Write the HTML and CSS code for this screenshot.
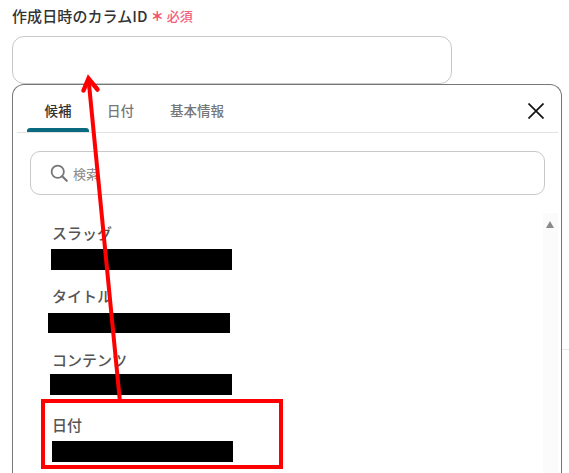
FILE: index.html
```html
<!DOCTYPE html>
<html lang="ja">
<head>
<meta charset="utf-8">
<title>作成日時のカラムID</title>
<link rel="stylesheet" href="styles.css">
</head>
<body>
<div class="backdrop-line"></div>
<main class="page">
  <div class="field-label">
    <span class="label-text">作成日時のカラムID</span>
    <span class="req-star">＊</span>
    <span class="req-text">必須</span>
  </div>
  <div class="text-input"></div>
  <section class="panel">
    <div class="tabs">
      <div class="tab tab-active">候補</div>
      <div class="tab tab-date">日付</div>
      <div class="tab tab-info">基本情報</div>
      <svg class="close" viewBox="0 0 16 16" width="16" height="16" aria-hidden="true">
        <path d="M0.5 0.5 L15.5 15.5 M15.5 0.5 L0.5 15.5" fill="none" stroke="#111" stroke-width="1.7"/>
      </svg>
    </div>
    <div class="search">
      <svg class="search-icon" viewBox="0 0 20 20" width="18" height="18" aria-hidden="true">
        <circle cx="8.6" cy="8.6" r="6.8" fill="none" stroke="#777" stroke-width="2"/>
        <path d="M13.6 13.6 L18.6 18.6" fill="none" stroke="#777" stroke-width="2.4" stroke-linecap="round"/>
      </svg>
      <span class="search-text">検索</span>
    </div>
    <div class="list-wrap">
      <ul class="list">
        <li class="item item-slug"><div class="item-name">スラッグ</div><div class="redact"></div></li>
        <li class="item item-title"><div class="item-name">タイトル</div><div class="redact"></div></li>
        <li class="item item-content"><div class="item-name">コンテンツ</div><div class="redact"></div></li>
        <li class="item item-date"><div class="item-name">日付</div><div class="redact"></div></li>
      </ul>
      <div class="scrollbar"><span class="scroll-up"></span></div>
    </div>
  </section>
</main>
<div class="highlight"></div>
<svg class="arrow" width="569" height="473" viewBox="0 0 569 473" aria-hidden="true">
  <path d="M119.8 400 L88.6 80" fill="none" stroke="#ff0000" stroke-width="4"/>
  <path d="M83.5 90.5 L88.5 78.5 L97.5 89.5" fill="none" stroke="#ff0000" stroke-width="4.5" stroke-linecap="round" stroke-linejoin="miter"/>
</svg>
</body>
</html>
```
FILE: styles.css
```css
html, body {
  margin: 0;
  padding: 0;
  background: #fff;
}
body {
  width: 569px;
  height: 473px;
  overflow: hidden;
  position: relative;
  font-family: "Noto Sans CJK JP", "Noto Sans", sans-serif;
}
.backdrop-line {
  position: absolute;
  left: 562px;
  top: 349px;
  width: 7px;
  height: 1px;
  background: #e8e8e8;
}
.page {
  padding: 5px 0 0 12px;
}
.field-label {
  display: flex;
  align-items: center;
  height: 22px;
  color: #333;
}
.label-text {
  font-size: 15px;
  font-weight: 500;
  line-height: 22px;
  letter-spacing: 0.1px;
}
.req-star {
  margin-left: 3px;
  width: 13px;
  font-size: 13px;
  font-weight: 900;
  line-height: 22px;
  text-align: center;
  color: #f4506c;
}
.req-text {
  margin-left: 3px;
  font-size: 13px;
  font-weight: 500;
  color: #f4607a;
  line-height: 22px;
}
.text-input {
  box-sizing: border-box;
  width: 440px;
  height: 48px;
  margin-top: 9px;
  border: 1px solid #c8c8c8;
  border-radius: 12px;
  background: #fff;
}
.panel {
  box-sizing: border-box;
  width: 550px;
  height: 389px;
  padding: 0 3px 0 4px;
  border: 1px solid #777;
  border-bottom: 0;
  border-radius: 12px 12px 0 0;
  background: #fff;
}
.tabs {
  position: relative;
  display: flex;
  height: 47px;
  border-bottom: 1px solid #e2e2e2;
}
.tab {
  position: relative;
  font-size: 13.5px;
  font-weight: 500;
  line-height: 20px;
  padding-top: 15px;
  color: #777;
}
.tab-active {
  width: 62px;
  margin-left: 10px;
  text-align: center;
  color: #333;
}
.tab-active::after {
  content: "";
  position: absolute;
  left: 0;
  right: 0;
  bottom: 0;
  height: 4px;
  background: #0b6a80;
  border-radius: 3px 3px 0 0;
}
.tab-date {
  margin-left: 18px;
}
.tab-info {
  margin-left: 36px;
}
.close {
  position: absolute;
  right: 14px;
  top: 18px;
}
.search {
  box-sizing: border-box;
  display: flex;
  align-items: center;
  width: 515px;
  height: 44px;
  margin: 18px 0 0 13px;
  padding-left: 19px;
  border: 1px solid #c8c8c8;
  border-radius: 10px;
}
.search-icon {
  flex: none;
}
.search-text {
  margin-left: 5px;
  font-size: 13px;
  color: #888;
}
.list-wrap {
  position: relative;
  height: 260px;
  margin-top: 18px;
}
.list {
  list-style: none;
  margin: 0;
  padding: 0;
}
.item-name {
  padding-left: 35px;
  font-size: 15px;
  font-weight: 500;
  line-height: 20px;
  color: #555;
}
.redact {
  width: 181px;
  height: 21px;
  margin-top: 6px;
  background: #000;
}
.item-slug {
  padding-top: 10px;
}
.item-slug .redact {
  margin-left: 34px;
}
.item-title {
  padding-top: 16px;
}
.item-title .redact {
  width: 182px;
  height: 20px;
  margin-top: 7px;
  margin-left: 31px;
}
.item-content {
  padding-top: 17px;
}
.item-content .redact {
  width: 182px;
  margin-left: 33px;
  margin-top: 4px;
}
.item-date {
  padding-top: 20px;
}
.item-date .redact {
  margin-left: 35px;
}
.scrollbar {
  position: absolute;
  top: 0;
  right: 0;
  bottom: 0;
  width: 15px;
  background: #fbfbfb;
}
.scroll-up {
  position: absolute;
  left: 3px;
  top: 8px;
  width: 0;
  height: 0;
  border-left: 4.5px solid transparent;
  border-right: 4.5px solid transparent;
  border-bottom: 7px solid #8a8a8a;
}
.highlight {
  position: absolute;
  left: 41px;
  top: 399px;
  width: 242px;
  height: 70px;
  box-sizing: border-box;
  border: 4px solid #ff0000;
}
.arrow {
  position: absolute;
  left: 0;
  top: 0;
  pointer-events: none;
}
```
